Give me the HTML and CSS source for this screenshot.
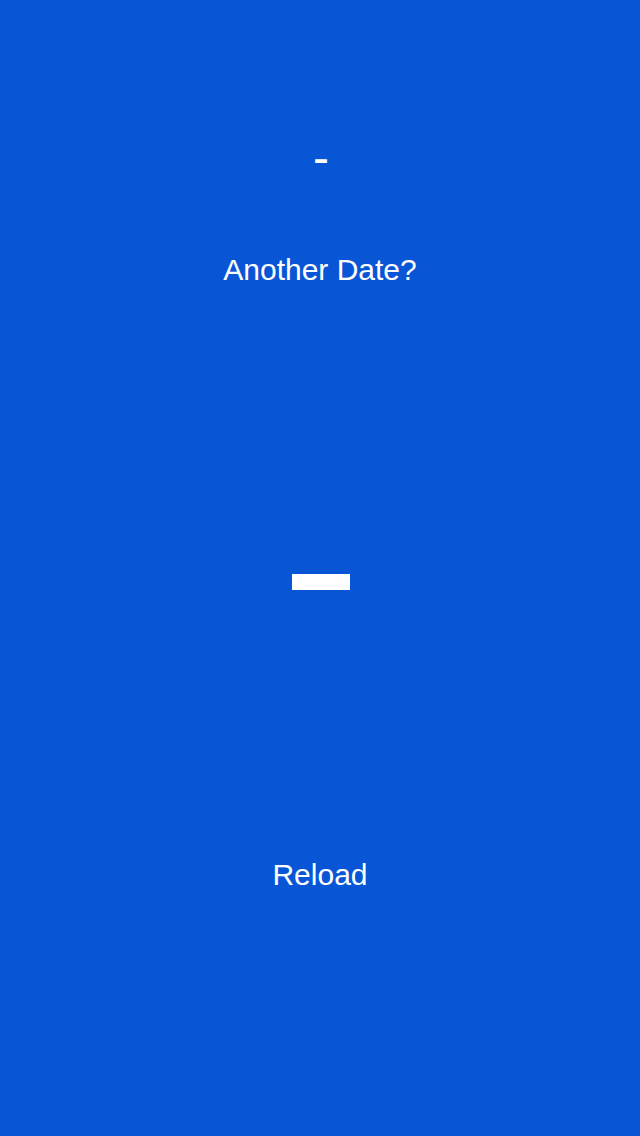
FILE: index.html
```html
<!DOCTYPE html>
<html>
<head>
<meta charset="utf-8">
<link rel="stylesheet" href="styles.css">
</head>
<body>
<div class="screen">
  <div class="topbar"></div>
  <div class="small-dash">-</div>
  <div class="question">Another Date?</div>
  <div class="big-dash" aria-label="-"></div>
  <div class="reload">Reload</div>
</div>
</body>
</html>
```
FILE: styles.css
```css
html, body {
  margin: 0;
  padding: 0;
  background: #0856d6;
}
.screen {
  width: 640px;
  height: 1136px;
  display: flex;
  flex-direction: column;
  align-items: center;
  font-family: "Liberation Sans", Arial, sans-serif;
  color: #fff;
}
.topbar {
  height: 60px;
  align-self: stretch;
}
.small-dash {
  margin-top: 73px;
  margin-left: 2px;
  height: 50px;
  line-height: 50px;
  font-size: 48px;
}
.question {
  margin-top: 70px;
  font-size: 30px;
  line-height: 34px;
}
.big-dash {
  margin-top: 287px;
  margin-left: 2px;
  width: 58px;
  height: 16px;
  background: #fff;
}
.reload {
  margin-top: 268px;
  font-size: 30px;
  line-height: 34px;
}
```
